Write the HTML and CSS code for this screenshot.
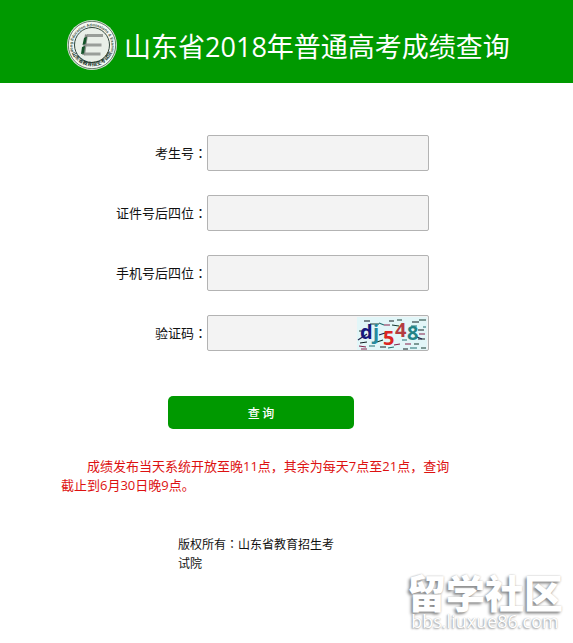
FILE: index.html
```html
<!DOCTYPE html>
<html lang="zh-CN">
<head>
    <meta charset="UTF-8">
    <meta name="viewport" content="width=device-width, initial-scale=1.0">
    <title>山东省2018年普通高考成绩查询</title>
    <link rel="stylesheet" href="styles.css">
</head>
<body>
    <header class="header">
        <div class="header-inner">
            <svg class="logo" viewBox="0 0 50 50" aria-hidden="true">
                <defs>
                    <path id="arc-top" d="M6.500 32 A19.500 19.500 0 1 1 43.500 32"/>
                    <path id="arc-bottom" d="M5 33 A22 22 0 0 0 45 33"/>
                </defs>
                <circle cx="25" cy="25" r="25" fill="#dce8dc"/>
                <circle cx="25" cy="25" r="23.700" fill="#f4f7f3" stroke="#46604a" stroke-width=".8"/>
                <circle cx="25" cy="25" r="17.500" fill="#e9efe8" stroke="#30463a" stroke-width="1"/>
                <text class="ring-en"><textPath href="#arc-top" startOffset="50%" text-anchor="middle">Shandong Education Admissions &amp; Examination</textPath></text>
                <text class="ring-cn"><textPath href="#arc-bottom" startOffset="50%" text-anchor="middle">山东省教育招生考试院</textPath></text>
                <path d="M20 15.500H36M18.500 25H34.500M17 34H33.500" stroke="#999e99" stroke-width="3" fill="none"/>
                <path d="M19.500 14.500 16.500 35" stroke="#8b908b" stroke-width="3" fill="none"/>
                <path d="M17 18 20 16.500 18.500 24 15.500 25ZM15 27 18 26 17 33.500 14 34Z" fill="#14542a"/>
            </svg>
            <h1>山东省2018年普通高考成绩查询</h1>
        </div>
    </header>

    <main class="content">
        <form class="query-form">
            <div class="row">
                <label for="ksh">考生号<span lang="zh-TW" class="colon">：</span></label>
                <input type="text" id="ksh">
            </div>
            <div class="row">
                <label for="zjh">证件号后四位<span lang="zh-TW" class="colon">：</span></label>
                <input type="text" id="zjh">
            </div>
            <div class="row">
                <label for="sjh">手机号后四位<span lang="zh-TW" class="colon">：</span></label>
                <input type="text" id="sjh">
            </div>
            <div class="row">
                <label for="yzm">验证码<span lang="zh-TW" class="colon">：</span></label>
                <div class="code-box">
                    <input type="text" id="yzm">
                    <svg class="captcha" viewBox="0 0 70 33" role="img" aria-label="验证码图片">
                        <rect width="70" height="33" fill="#e2f6f8"/>
                        <path d="M7 4h6M32 4h5M55 5h7M3 26l7-1M23 30h6M46 32h5M61 22h7M61 13h6" stroke="#101d21" stroke-width="1.200"/>
                        <path d="M13 7h9M35 8l7 1M40 3h5M62 3h7M2 14h4M57 27h5M20 25l6-2M64 31h5" stroke="#163a30" stroke-width="1.200"/>
                        <path d="M2 29l7 1M4 32h6M27 8h6M37 28l6-1M48 27h6M62 17h6" stroke="#83204a" stroke-width="1.200"/>
                        <path d="M22 6l5 2M12 29h6M31 31l6-1M54 9h6M66 10h3M45 23h5M53 31h7" stroke="#206f70" stroke-width="1.200"/>
                        <path d="M1 23l9-6M22 18l6-2M60 20l5 2" stroke="#202450" stroke-width="1.200"/>
                        <text x="3" y="22" fill="#17197d">d</text>
                        <text x="16" y="22" fill="#268a9d">j</text>
                        <text x="26" y="28" fill="#dc2623">5</text>
                        <text x="38" y="20" fill="#b43c40">4</text>
                        <text x="50" y="23" fill="#238386">8</text>
                    </svg>
                </div>
            </div>
            <button type="submit">查 询</button>
        </form>

        <p class="notice">成绩发布当天系统开放至晚11点，其余为每天7点至21点，查询截止到6月30日晚9点。</p>
    </main>

    <footer class="footer">
        <p>版权所有<span lang="zh-TW" class="colon">：</span>山东省教育招生考试院</p>
    </footer>

    <div class="watermark">
        <strong>留学社区</strong>
        <span>bbs.liuxue86.com</span>
    </div>
</body>
</html>
```
FILE: styles.css
```css
* {
    margin: 0;
    padding: 0;
    box-sizing: border-box;
}
body {
    position: relative;
    min-height: 100vh;
    background: #fff;
    color: #111;
    font-family: "Open Sans", "Noto Sans CJK SC", sans-serif;
    font-size: 13px;
}
/* colon in the middle of its cell */
.colon {
    font-family: "Noto Sans CJK TC", sans-serif;
    line-height: 1;
}

/* header */
.header {
    background: #009900;
    color: #fff;
}
.header-inner {
    display: flex;
    align-items: center;
    justify-content: center;
    gap: 7px;
    height: 83px;
    padding-left: 4px;
}
.logo {
    width: 50px;
    height: 50px;
    margin-top: 7px;
    overflow: visible;
}
.ring-en {
    font: bold 4px "Liberation Sans", sans-serif;
    fill: #3c5543;
}
.ring-cn {
    font: bold 5px "Noto Sans CJK SC", sans-serif;
    fill: #20352a;
}
.header h1 {
    margin-top: 10px;
    font-size: 27px;
    line-height: 40px;
    font-weight: 400;
    white-space: nowrap;
}

/* form */
.content {
    max-width: 573px;
    margin: 0 auto;
    padding: 52px 24px 0 61px;
}
.query-form {
    display: flex;
    flex-direction: column;
    gap: 24px;
}
.row {
    display: grid;
    grid-template-columns: 146px 222px;
    align-items: center;
}
.row label {
    text-align: right;
    line-height: 20px;
}
.row input {
    display: block;
    width: 100%;
    height: 36px;
    padding: 0 8px;
    border: 1px solid #b3b3b3;
    border-radius: 2px;
    background: #f3f3f3;
    font: inherit;
}
.code-box {
    position: relative;
}
.captcha {
    position: absolute;
    top: 2px;
    right: 2px;
    width: 70px;
    height: 33px;
    overflow: visible;
    font: bold 20px "Open Sans", sans-serif;
}
.query-form button {
    width: 186px;
    height: 33px;
    margin: 21px 0 0 107px;
    border: none;
    border-radius: 5px;
    background: #009900;
    color: #fff;
    font: 500 12px "Noto Sans CJK SC", sans-serif;
    cursor: pointer;
}
.notice {
    max-width: 400px;
    margin-top: 28px;
    color: #dd1111;
    line-height: 19px;
    text-indent: 26px;
}

/* footer */
.footer {
    max-width: 573px;
    margin: 0 auto;
    padding: 40px 24px 0 178px;
    font-size: 12px;
    line-height: 19px;
}
.footer p {
    max-width: 160px;
}

.watermark {
    position: absolute;
    right: 10px;
    bottom: 12px;
    display: flex;
    flex-direction: column;
    align-items: center;
    color: #fff;
    text-shadow: -2px 2px 3px #888, 0 0 2px #bbb;
}
.watermark strong {
    font-size: 39px;
    line-height: 37px;
    font-weight: 900;
}
.watermark span {
    font-size: 18px;
    line-height: 20px;
    text-shadow: -1px 1px 2px #999, 0 0 1px #bbb;
}
```
